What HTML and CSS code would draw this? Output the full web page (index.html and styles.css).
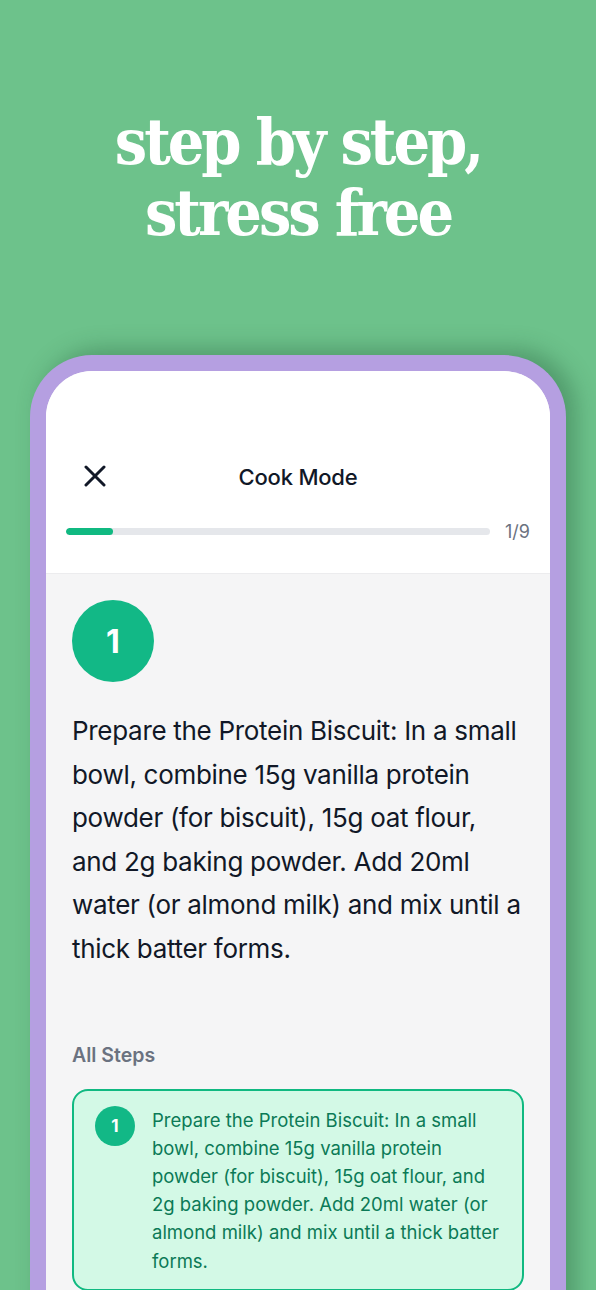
FILE: index.html
```html
<!doctype html>
<html>
	<head>
		<meta charset="UTF-8">
		<title>Cook Mode</title>
		<link rel="stylesheet" href="styles.css">
	</head>

	<body>
		<div class="page">
			<h1 class="hero">step by step,<br>stress free</h1>

			<div class="phone">
				<div class="screen">
					<!-- 顶部：关闭按钮 + 标题 + 进度 -->
					<div class="top">
						<div class="nav">
							<span class="close">
								<svg width="22" height="22" viewBox="0 0 22 22">
									<path d="M2 2L20 20M20 2L2 20" stroke="#111827" stroke-width="3" stroke-linecap="round" fill="none"/>
								</svg>
							</span>
							<span class="nav-title">Cook Mode</span>
						</div>
						<div class="progress">
							<div class="track"><div class="fill" style="width: 11.1%"></div></div>
							<span class="count">1/9</span>
						</div>
					</div>

					<div class="body">
						<div class="num big">1</div>
						<p class="step-text">Prepare the Protein Biscuit: In a small bowl, combine 15g vanilla protein powder (for biscuit), 15g oat flour, and 2g baking powder. Add 20ml water (or almond milk) and mix until a thick batter forms.</p>

						<h2 class="label">All Steps</h2>
						<ul class="steps">
							<li class="on">
								<span class="num small">1</span>
								<p>Prepare the Protein Biscuit: In a small bowl, combine 15g vanilla protein powder (for biscuit), 15g oat flour, and 2g baking powder. Add 20ml water (or almond milk) and mix until a thick batter forms.</p>
							</li>
						</ul>
					</div>
				</div>
			</div>
		</div>
	</body>

</html>
```

FILE: styles.css
```css
* {
	margin: 0;
	padding: 0;
	box-sizing: border-box;
}

li {
	list-style: none;
}

body {
	background-color: #6dc28b;
	font-family: Inter, "Noto Sans", sans-serif;
}

.page {
	height: 1290px;
	overflow: hidden;
}

.hero {
	padding-top: 106px;
	color: #fff;
	font-family: "DejaVu Serif Condensed", "DejaVu Serif", serif;
	font-stretch: condensed;
	font-weight: bold;
	font-size: 64px;
	line-height: 71px;
	letter-spacing: -3px;
	text-align: center;
}

.phone {
	margin: 107px 30px 0;
	min-height: 1000px;
	border: 16px solid #b59fe1;
	border-bottom: none;
	border-radius: 62px 62px 0 0;
	background-color: #b59fe1;
	box-shadow: 10px -6px 22px rgba(30, 80, 50, .35);
}

.screen {
	overflow: hidden;
	min-height: 1000px;
	border-radius: 46px 46px 0 0;
	background-color: #f5f5f6;
}

.top {
	padding: 84px 0 0;
	background-color: #fff;
	border-bottom: 1px solid #ececee;
}

.nav {
	position: relative;
	height: 44px;
	display: flex;
	align-items: center;
	justify-content: center;
}

.close {
	position: absolute;
	left: 38px;
	top: 10px;
	width: 22px;
	height: 22px;
}

.close svg {
	display: block;
}

.nav-title {
	color: #111827;
	font-size: 22px;
	font-weight: 500;
	letter-spacing: -0.2px;
}

.progress {
	display: flex;
	align-items: center;
	height: 26px;
	margin-top: 19px;
	padding: 0 20px 0 20px;
	margin-bottom: 29px;
}

.track {
	flex: 1;
	height: 7px;
	border-radius: 4px;
	background-color: #e5e7eb;
	overflow: hidden;
}

.fill {
	height: 100%;
	border-radius: 4px;
	background-color: #10b981;
}

.count {
	margin-left: 15px;
	color: #6b7280;
	font-size: 18px;
}

.body {
	padding: 26px 26px 0 26px;
}

.num {
	display: flex;
	align-items: center;
	justify-content: center;
	border-radius: 50%;
	background-color: #12b886;
	color: #fff;
	font-weight: 700;
}

.num.big {
	width: 82px;
	height: 82px;
	font-size: 32px;
}

.step-text {
	margin-top: 27px;
	color: #111827;
	font-size: 26px;
	line-height: 43.6px;
	letter-spacing: -0.3px;
}

.label {
	margin-top: 72px;
	color: #6b7280;
	font-size: 19.5px;
	font-weight: 600;
	line-height: 24px;
}

.steps {
	margin-top: 22px;
}

.steps li {
	display: flex;
	align-items: flex-start;
	gap: 17px;
	padding: 15px 18px 14px 21px;
	border: 2px solid #10b981;
	border-radius: 16px;
	background-color: #d3f9e6;
}

.num.small {
	flex: none;
	width: 40px;
	height: 40px;
	font-size: 17px;
}

.steps p {
	color: #0b7a56;
	font-size: 18.5px;
	line-height: 28.2px;
}
```
